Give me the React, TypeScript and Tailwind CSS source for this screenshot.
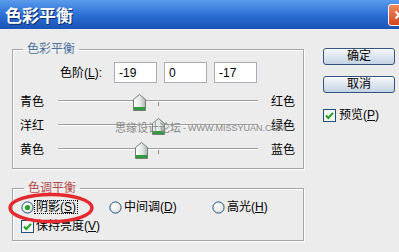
import React from "react";

const sliders = [
  { left: "青色", right: "红色", value: -19 },
  { left: "洋红", right: "绿色", value: 0 },
  { left: "黄色", right: "蓝色", value: -17 },
];

function Thumb() {
  return (
    <svg width="13" height="17" viewBox="0 0 13 17">
      <defs>
        <linearGradient id="thumbFill" x1="0" x2="1" y1="0" y2="0">
          <stop offset="0" stopColor="#ffffff" />
          <stop offset="0.6" stopColor="#dfe4e2" />
          <stop offset="1" stopColor="#a9b3b0" />
        </linearGradient>
      </defs>
      <path d="M6.5 0.5 L12.5 5.5 L12.5 16.5 L0.5 16.5 L0.5 5.5 Z" fill="url(#thumbFill)" stroke="#6f7f78" />
      <rect x="1" y="13" width="11" height="3" fill="#2e9a3c" />
    </svg>
  );
}

function CheckBox() {
  return (
    <svg width="13" height="13" viewBox="0 0 13 13" className="shrink-0">
      <rect x="0.5" y="0.5" width="12" height="12" fill="#f6f6f2" stroke="#1c5180" />
      <path d="M3 6.5 L5.3 9 L10 3.8" fill="none" stroke="#21a121" strokeWidth="2" />
    </svg>
  );
}

function Radio({ checked }: { checked?: boolean }) {
  return (
    <svg width="13" height="13" viewBox="0 0 13 13" className="shrink-0">
      <defs>
        <radialGradient id="radioFill" cx="0.35" cy="0.35" r="0.8">
          <stop offset="0" stopColor="#ffffff" />
          <stop offset="1" stopColor="#dcdcd6" />
        </radialGradient>
      </defs>
      <circle cx="6.5" cy="6.5" r="5.6" fill="url(#radioFill)" stroke="#1c5180" />
      {checked && <circle cx="6.5" cy="6.5" r="2.6" fill="#25a225" />}
    </svg>
  );
}

function Button({ label }: { label: string }) {
  return (
    <div className="h-[17px] w-[72px] rounded-[3px] border border-[#34557e] bg-gradient-to-b from-[#f6f8fb] to-[#c4d3e4] text-center leading-[15px] shadow-[inset_0_1px_0_#ffffff]">
      {label}
    </div>
  );
}

export default function App() {
  return (
    <div className="relative h-[252px] w-[399px] overflow-hidden bg-[#ececec] font-['Liberation_Sans','Noto_Sans_CJK_SC',sans-serif] text-[12px] leading-[14px] text-black">
      {/* title bar */}
      <div className="flex h-[29px] items-center bg-gradient-to-b from-[#5b9cec] via-[#2d70d6] to-[#1953b6] pl-[5px]">
        <span className="font-['Noto_Sans_CJK_SC',sans-serif] text-[17px] font-bold leading-[20px] text-white [text-shadow:1px_1px_0_#0b2c6c]">
          色彩平衡
        </span>
        <div className="-mr-[11px] ml-auto flex h-[22px] w-[22px] items-center justify-center rounded-[3px] border border-white bg-gradient-to-b from-[#ee8a5c] to-[#d4461c]">
          <svg width="10" height="10" viewBox="0 0 10 10">
            <path d="M1.5 1.5 L8.5 8.5 M8.5 1.5 L1.5 8.5" stroke="#fff" strokeWidth="2" />
          </svg>
        </div>
      </div>

      <div className="flex">
        {/* left part */}
        <div className="w-[323px] pl-[12px] pt-[14px]">
          <fieldset className="h-[126px] w-[292px] border border-[#a6a6a6] shadow-[inset_1px_1px_0_#ffffff,1px_1px_0_#ffffff]">
            <legend className="ml-[10px] px-[4px] text-[12px] leading-[12px] text-[#4d729e]">色彩平衡</legend>
            <div className="mt-[7px] flex items-center pl-[47px]">
              <span className="w-[46px]">
                色阶(<u>L</u>):
              </span>
              <div className="ml-[8px] flex gap-[7px]">
                {["-19", "0", "-17"].map((v, i) => (
                  <div key={i} className="flex h-[21px] w-[43px] items-center border border-[#a9aeb4] bg-white pl-[4px]">
                    {v}
                  </div>
                ))}
              </div>
            </div>
            <div className="mt-[7px] flex flex-col">
              {sliders.map((s) => (
                <div key={s.left} className="flex h-[24px] items-center pl-[7px]">
                  <span className="w-[38px]">{s.left}</span>
                  <div className="relative h-[17px] w-[200px]">
                    <div className="absolute left-0 right-0 top-[6px] h-[2px] rounded-l-full border-t border-[#9c9c9c] bg-white" />
                    <div className="absolute left-[100px] top-[8px] h-[4px] w-px bg-[#8a8a8a]" />
                    <div className="absolute top-0" style={{ left: s.value + 100 - 6 }}>
                      <Thumb />
                    </div>
                  </div>
                  <span className="ml-[13px]">{s.right}</span>
                </div>
              ))}
            </div>
          </fieldset>

          <fieldset className="mt-[13px] h-[59px] w-[292px] border border-[#a6a6a6] shadow-[inset_1px_1px_0_#ffffff,1px_1px_0_#ffffff]">
            <legend className="ml-[11px] px-[4px] text-[12px] leading-[12px] text-[#b44c4c]">色调平衡</legend>
            <div className="mt-[6px] flex h-[14px] items-center pl-[8px]">
              <div className="flex w-[88px] items-center">
                <Radio checked />
                <span className="border border-dotted border-black px-[1px] leading-[12px]">
                  阴影(<u>S</u>)
                </span>
              </div>
              <div className="flex w-[103px] items-center">
                <Radio />
                <span className="ml-[2px]">
                  中间调(<u>D</u>)
                </span>
              </div>
              <div className="flex items-center">
                <Radio />
                <span className="ml-[2px]">
                  高光(<u>H</u>)
                </span>
              </div>
            </div>
            <div className="mt-[5px] flex items-center pl-[8px]">
              <CheckBox />
              <span className="ml-[2px]">
                保持亮度(<u>V</u>)
              </span>
            </div>
          </fieldset>
        </div>

        {/* right part */}
        <div className="flex flex-col pt-[19px]">
          <Button label="确定" />
          <div className="mt-[11px]">
            <Button label="取消" />
          </div>
          <div className="mt-[15px] flex items-center">
            <CheckBox />
            <span className="ml-[3px]">
              预览(<u>P</u>)
            </span>
          </div>
        </div>
      </div>

      {/* watermark */}
      <div className="absolute left-[115px] top-[121px] flex items-center text-[#8a8a8a]">
        <span className="text-[11px] leading-[13px]">思缘设计论坛</span>
        <span className="ml-[2px] text-[9px]">-</span>
        <span className="ml-[2px] text-[9px] leading-[11px]">WWW.MISSYUAN.COM</span>
      </div>

      {/* red highlight */}
      <svg className="absolute left-[6px] top-[191px]" width="92" height="34" viewBox="0 0 92 34">
        <defs>
          <filter id="soft" x="-10%" y="-20%" width="120%" height="140%">
            <feGaussianBlur stdDeviation="0.7" />
          </filter>
        </defs>
        <ellipse cx="45" cy="17" rx="41" ry="13.5" fill="none" stroke="#e42a2e" strokeWidth="3.5" filter="url(#soft)" />
      </svg>
    </div>
  );
}
